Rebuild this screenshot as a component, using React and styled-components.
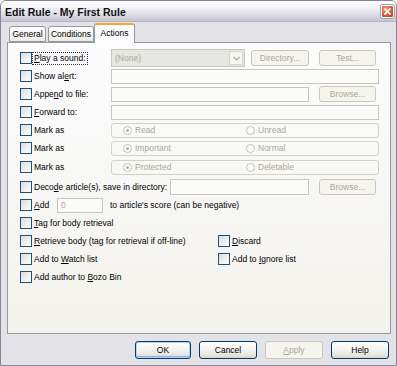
import React from 'react';
import styled, { createGlobalStyle, css } from 'styled-components';

const GlobalStyle = createGlobalStyle`
  html, body { margin: 0; padding: 0; background: #ffffff; }
  body { font-family: "Liberation Sans", Arial, sans-serif; font-size: 8.5px; color: #000; }
  * { box-sizing: border-box; }
`;

const Window = styled.div`
  width: 397px;
  height: 366px;
  display: flex;
  flex-direction: column;
  background: #e3e2e7;
  border: 1px solid #85849a;
  border-radius: 6px 6px 0 0;
  overflow: hidden;
`;

const TitleBar = styled.div`
  height: 21px;
  flex-shrink: 0;
  display: flex;
  align-items: center;
  justify-content: space-between;
  padding: 0 2px 0 4px;
  background: linear-gradient(#ffffff 0%, #f3f3f7 30%, #dcdce6 70%, #c6c6d2 100%);
  border-bottom: 1px solid #b4b4c4;
`;

const Title = styled.div`
  font-weight: bold;
  font-size: 10.5px;
  color: #111;
  padding-top: 1px;
`;

const CloseBtn = styled.div`
  width: 13px;
  height: 13px;
  margin-top: 1px;
  border-radius: 2px;
  border: 1px solid #ffffff;
  background: radial-gradient(circle at 35% 30%, #f0a080 0%, #dc5a3a 55%, #b8321c 100%);
  display: flex;
  align-items: center;
  justify-content: center;
  box-shadow: 0 0 0 1px #a0a0b0;
`;

const Body = styled.div`
  flex: 1;
  display: flex;
  flex-direction: column;
  padding: 1px 5px 0 6px;
`;

const Tabs = styled.div`
  display: flex;
  align-items: flex-end;
  height: 20px;
  margin-bottom: -1px;
  padding-left: 2px;
  position: relative;
  z-index: 1;
`;

const Tab = styled.div`
  width: ${p => p.$w}px;
  display: flex;
  align-items: center;
  justify-content: center;
  border: 1px solid #919b9c;
  border-radius: 3px 3px 0 0;
  margin-right: 2px;
  ${p => p.$active
    ? css`
      height: 20px;
      margin-left: -2px;
      border-bottom: none;
      border-top: 2px solid #f5a737;
      background: #fcfcfe;
      padding-bottom: 2px;
    `
    : css`
      height: 16px;
      margin-bottom: 1px;
      background: linear-gradient(#ffffff, #ecebe6);
    `}
`;

const Panel = styled.div`
  height: 292px;
  border: 1px solid #919b9c;
  background: linear-gradient(#fcfcfe, #f3f2ec);
  padding: 6px 11px 0 12px;
  display: flex;
  flex-direction: column;
`;

const Row = styled.div`
  display: flex;
  align-items: center;
  height: 18px;
  margin-top: ${p => p.$mt || 0}px;
`;

const LabelCell = styled.label`
  display: flex;
  align-items: center;
  width: ${p => (p.$w ? `${p.$w}px` : 'auto')};
  flex-shrink: 0;
  white-space: nowrap;
`;

const Box = styled.span`
  width: 12px;
  height: 12px;
  flex-shrink: 0;
  border: 1px solid #1c5180;
  background: linear-gradient(135deg, #dcdcd7, #ffffff);
  margin-right: 1px;
`;

const LabelText = styled.span`
  padding: 0 1px;
  line-height: 11px;
  ${p => p.$focus && css`outline: 1px dotted #333;`}
`;

const TextBox = styled.div`
  height: ${p => p.$h || 15}px;
  width: ${p => (p.$w ? `${p.$w}px` : 'auto')};
  flex: ${p => (p.$w ? 'none' : 1)};
  border: 1px solid #c7c6bd;
  background: #fbfbf9;
  color: #aca899;
  padding-left: 3px;
  display: flex;
  align-items: center;
`;

const Combo = styled.div`
  width: 134px;
  height: 18px;
  border: 1px solid #c9c7ba;
  background: #e6e6e2;
  display: flex;
  align-items: center;
  justify-content: space-between;
  padding: 1px 1px 1px 3px;
  color: #aca899;
`;

const ComboArrow = styled.div`
  width: 14px;
  height: 14px;
  border: 1px solid #d6d5cc;
  border-radius: 2px;
  background: #f5f5f1;
  display: flex;
  align-items: center;
  justify-content: center;
`;

const DisButton = styled.div`
  width: ${p => p.$w || 57}px;
  height: 16px;
  margin-left: ${p => p.$ml || 0}px;
  border: 1px solid #c9c7ba;
  border-radius: 3px;
  background: #f5f4ef;
  color: #aca899;
  display: flex;
  align-items: center;
  justify-content: center;
  flex-shrink: 0;
`;

const GroupBox = styled.div`
  flex: 1;
  height: 15px;
  border: 1px solid #d3d2c6;
  border-radius: 3px;
  display: grid;
  grid-template-columns: 123px 1fr;
  align-items: center;
  padding-left: 11px;
`;

const RadioOpt = styled.div`
  display: flex;
  align-items: center;
  color: #aca899;
`;

const RadioDot = styled.span`
  width: 9px;
  height: 9px;
  border-radius: 50%;
  border: 1px solid #c4c3b8;
  background: #fbfbf9;
  margin-right: 3px;
  display: flex;
  align-items: center;
  justify-content: center;
  &::after {
    content: '';
    width: 3px;
    height: 3px;
    border-radius: 50%;
    background: ${p => (p.$on ? '#b5b4a8' : 'transparent')};
  }
`;

const PlainText = styled.span`
  margin-left: ${p => p.$ml || 0}px;
  white-space: nowrap;
`;

const Footer = styled.div`
  display: flex;
  justify-content: flex-end;
  gap: 8px;
  padding-right: 2px;
  margin-top: 7px;
`;

const Button = styled.div`
  width: ${p => p.$w || 57}px;
  height: 18px;
  border-radius: 3px;
  display: flex;
  align-items: center;
  justify-content: center;
  ${p => p.$disabled
    ? css`
      border: 1px solid #c9c7ba;
      background: #f5f4ef;
      color: #aca899;
    `
    : css`
      border: 1px solid #003c74;
      background: linear-gradient(#ffffff 0%, #f3f3ef 50%, #e2e0d8 90%, #d6d0c5 100%);
      color: #000;
    `}
  ${p => p.$default && css`
    box-shadow: inset 0 0 0 1px #b9d1f4, inset 0 -1px 0 1px #89adE4;
  `}
`;

const Check = ({ children, w, focus }) => (
  <LabelCell $w={w}>
    <Box />
    <LabelText $focus={focus}>{children}</LabelText>
  </LabelCell>
);

const RadioGroup = ({ a, b }) => (
  <GroupBox>
    <RadioOpt><RadioDot $on />{a}</RadioOpt>
    <RadioOpt><RadioDot />{b}</RadioOpt>
  </GroupBox>
);

export default function App() {
  return (
    <>
      <GlobalStyle />
      <Window>
        <TitleBar>
          <Title>Edit Rule - My First Rule</Title>
          <CloseBtn>
            <svg width="7" height="7" viewBox="0 0 7 7">
              <path d="M1 1 L6 6 M6 1 L1 6" stroke="#fff" strokeWidth="1.6" strokeLinecap="square" />
            </svg>
          </CloseBtn>
        </TitleBar>
        <Body>
          <Tabs>
            <Tab $w={37}>General</Tab>
            <Tab $w={46}>Conditions</Tab>
            <Tab $w={41} $active>Actions</Tab>
          </Tabs>
          <Panel>
            <Row>
              <Check w={91} focus><u>P</u>lay a sound:</Check>
              <Combo>
                (None)
                <ComboArrow>
                  <svg width="7" height="5" viewBox="0 0 7 5">
                    <path d="M0.5 1 L3.5 4 L6.5 1" stroke="#b0afa6" strokeWidth="1.2" fill="none" />
                  </svg>
                </ComboArrow>
              </Combo>
              <DisButton $w={58} $ml={6}>Directory...</DisButton>
              <DisButton $w={57} $ml={10}>Test...</DisButton>
            </Row>
            <Row>
              <Check w={91}>Show al<u>e</u>rt:</Check>
              <TextBox />
            </Row>
            <Row>
              <Check w={91}>Appe<u>n</u>d to file:</Check>
              <TextBox $w={198} />
              <DisButton $ml={10}>Browse...</DisButton>
            </Row>
            <Row>
              <Check w={91}><u>F</u>orward to:</Check>
              <TextBox />
            </Row>
            <Row>
              <Check w={91}>Mark as</Check>
              <RadioGroup a="Read" b="Unread" />
            </Row>
            <Row>
              <Check w={91}>Mark as</Check>
              <RadioGroup a="Important" b="Normal" />
            </Row>
            <Row $mt={1}>
              <Check w={91}>Mark as</Check>
              <RadioGroup a="Protected" b="Deletable" />
            </Row>
            <Row $mt={2}>
              <Check w={150}>Deco<u>d</u>e article(s), save in directory:</Check>
              <TextBox $w={139} $h={16} />
              <DisButton $ml={10}>Browse...</DisButton>
            </Row>
            <Row>
              <Check w={37}><u>A</u>dd</Check>
              <TextBox $w={46}>0</TextBox>
              <PlainText $ml={7}>to article's score (can be negative)</PlainText>
            </Row>
            <Row>
              <Check><u>T</u>ag for body retrieval</Check>
            </Row>
            <Row>
              <Check w={198}><u>R</u>etrieve body (tag for retrieval if off-line)</Check>
              <Check><u>D</u>iscard</Check>
            </Row>
            <Row>
              <Check w={198}>Add to <u>W</u>atch list</Check>
              <Check>Add to <u>I</u>gnore list</Check>
            </Row>
            <Row>
              <Check>Add author to <u>B</u>ozo Bin</Check>
            </Row>
          </Panel>
          <Footer>
            <Button $w={56} $default>OK</Button>
            <Button $w={58}>Cancel</Button>
            <Button $w={58} $disabled><u>A</u>pply</Button>
            <Button $w={58}>Help</Button>
          </Footer>
        </Body>
      </Window>
    </>
  );
}
